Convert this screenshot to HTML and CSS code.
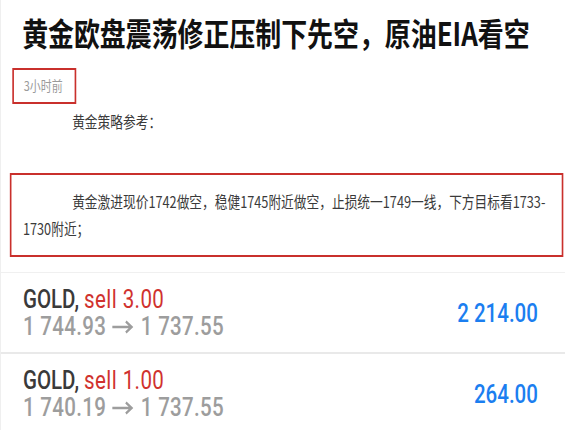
FILE: index.html
```html
<!DOCTYPE html>
<html lang="zh-CN">
<head>
<meta charset="utf-8">
<title>黄金欧盘震荡修正压制下先空</title>
<link rel="stylesheet" href="styles.css">
</head>
<body>
<div class="viewport">
<div class="page">
  <article class="article">
    <h1 class="title">黄金欧盘震荡修正压制下先空，原油EIA看空</h1>
    <div class="time">3小时前</div>
    <p class="lead">黄金策略参考：</p>
    <div class="strategy">
      <p class="strategy-text">黄金激进现价1742做空，稳健1745附近做空，止损统一1749一线，下方目标看1733-<wbr>1730附近；</p>
    </div>
  </article>
  <section class="trades">
    <div class="trade">
      <div class="trade-info">
        <div class="trade-head"><span class="symbol">GOLD,</span> <span class="side">sell 3.00</span></div>
        <div class="trade-prices">1 744.93<svg class="arrow" viewBox="0 0 27 14" aria-label="→"><path d="M1 7H24M17.5 1.5L24.5 7L17.5 12.5"/></svg>1 737.55</div>
      </div>
      <div class="trade-profit">2 214.00</div>
    </div>
    <div class="trade">
      <div class="trade-info">
        <div class="trade-head"><span class="symbol">GOLD,</span> <span class="side">sell 1.00</span></div>
        <div class="trade-prices">1 740.19<svg class="arrow" viewBox="0 0 27 14" aria-label="→"><path d="M1 7H24M17.5 1.5L24.5 7L17.5 12.5"/></svg>1 737.55</div>
      </div>
      <div class="trade-profit">264.00</div>
    </div>
  </section>
</div>
</div>
</body>
</html>
```

FILE: styles.css
```css
html, body {
  margin: 0;
  padding: 0;
  overflow: hidden;
  background: #ffffff;
}

.viewport {
  width: 565px;
  height: 430px;
  overflow: hidden;
}

.page {
  width: 688px;
  min-height: 440px;
  border-left: 1px solid #ececec;
  border-right: 1px solid #ececec;
  transform: scaleX(0.82);
  transform-origin: 0 0;
  font-family: "Noto Sans CJK SC", "Noto Sans", sans-serif;
  color: #333333;
}

.article {
  padding: 12px 2px 15px 11px;
}

.title {
  margin: 0;
  padding-left: 15px;
  font-size: 31.6px;
  line-height: 40px;
  font-weight: 700;
  color: #111111;
}

.time {
  margin: 16px 0 0 3px;
  width: 62px;
  height: 32px;
  border: 2px solid #c9302c;
  padding-left: 12px;
  font-size: 13.3px;
  line-height: 32px;
  color: #9a9a9a;
}

.lead {
  margin: 4px 0 0 16px;
  text-indent: 60px;
  font-size: 15.5px;
  line-height: 27px;
  color: #3a3a3a;
}

.strategy {
  margin-top: 38px;
  border: 2px solid #c9302c;
  padding: 13px 8px 13px 14px;
}

.strategy-text {
  margin: 0;
  text-indent: 60px;
  font-size: 15.5px;
  line-height: 27px;
  color: #3a3a3a;
}

.trades {
  border-top: 1px solid #f0f0f0;
  font-family: Roboto, "Noto Sans", sans-serif;
}

.trade {
  display: flex;
  align-items: center;
  justify-content: space-between;
  padding: 13px 33px 12px 27px;
  border-bottom: 2px solid #e9e9e9;
}

.trade-head,
.trade-prices {
  font-size: 25px;
  line-height: 27px;
}

.symbol {
  font-weight: 500;
  color: #3a3a3a;
}

.side {
  font-weight: 400;
  letter-spacing: 0.5px;
  color: #d0322e;
}

.trade-prices {
  font-weight: 500;
  letter-spacing: 0.4px;
  color: #9d9d9d;
}

.arrow {
  width: 27px;
  height: 14px;
  margin: 0 9px 0 6px;
  vertical-align: 1px;
  fill: none;
  stroke: #9d9d9d;
  stroke-width: 2.6;
}

.trade-profit {
  font-size: 25px;
  font-weight: 500;
  color: #1b7ef0;
}
```
